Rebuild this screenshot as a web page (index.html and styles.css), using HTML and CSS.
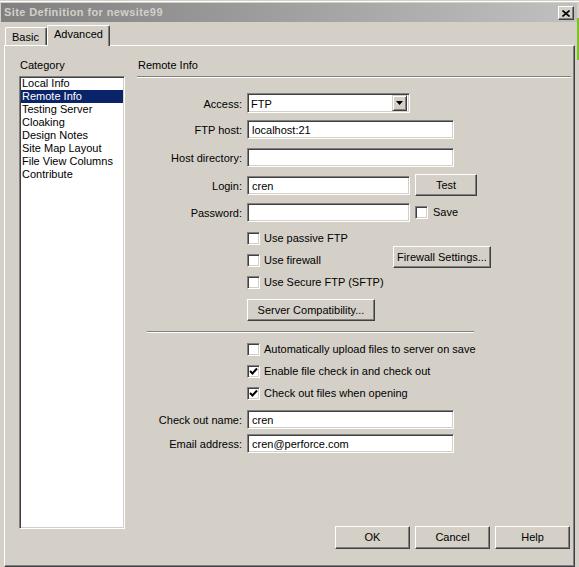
FILE: index.html
```html
<!DOCTYPE html>
<html>
<head>
<meta charset="utf-8">
<title>Site Definition for newsite99</title>
<link rel="stylesheet" href="styles.css">
</head>
<body>
<div class="window">
  <div class="titlebar">
    <span class="title">Site Definition for newsite99</span>
    <span class="close-btn">
      <svg width="8" height="7" viewBox="0 0 8 7"><path d="M0.5 0.5 L7.5 6.5 M7.5 0.5 L0.5 6.5" stroke="#000" stroke-width="1.6" fill="none"/></svg>
    </span>
  </div>
  <div class="tabs">
    <div class="tab tab-basic">Basic</div>
    <div class="tab tab-active">Advanced</div>
  </div>
  <div class="panel">
    <div class="left-col">
      <div class="caption">Category</div>
      <ul class="listbox">
        <li>Local Info</li>
        <li class="selected">Remote Info</li>
        <li>Testing Server</li>
        <li>Cloaking</li>
        <li>Design Notes</li>
        <li>Site Map Layout</li>
        <li>File View Columns</li>
        <li>Contribute</li>
      </ul>
    </div>
    <div class="right-col">
      <div class="caption">Remote Info</div>
      <div class="etched etched-head"></div>

      <div class="row row-access">
        <span class="lbl">Access:</span>
        <div class="select sunken">
          <span class="select-text">FTP</span>
          <span class="select-btn">
            <svg width="7" height="4" viewBox="0 0 7 4"><path d="M0 0 H7 L3.5 4 Z" fill="#000"/></svg>
          </span>
        </div>
      </div>
      <div class="row row-m7">
        <span class="lbl">FTP host:</span>
        <div class="field sunken wide">localhost:21</div>
      </div>
      <div class="row row-m9">
        <span class="lbl">Host directory:</span>
        <div class="field sunken wide"></div>
      </div>
      <div class="row row-m9">
        <span class="lbl">Login:</span>
        <div class="field sunken narrow">cren</div>
        <button class="btn btn-test">Test</button>
      </div>
      <div class="row row-m8">
        <span class="lbl">Password:</span>
        <div class="field sunken narrow"></div>
        <span class="check-item save-item"><span class="cb sunken"></span>Save</span>
      </div>

      <div class="check-group">
        <div class="checks">
          <span class="check-item"><span class="cb sunken"></span>Use passive FTP</span>
          <span class="check-item"><span class="cb sunken"></span>Use firewall</span>
          <span class="check-item"><span class="cb sunken"></span>Use Secure FTP (SFTP)</span>
        </div>
        <button class="btn btn-firewall">Firewall Settings...</button>
      </div>

      <div class="indent">
        <button class="btn btn-compat">Server Compatibility...</button>
      </div>

      <div class="etched etched-mid"></div>

      <div class="checks checks-lower indent">
        <span class="check-item"><span class="cb sunken"></span>Automatically upload files to server on save</span>
        <span class="check-item"><span class="cb sunken"><svg width="9" height="9" viewBox="0 0 9 9"><path d="M1 4 L3.5 6.5 L8 1.5" stroke="#000" stroke-width="2" fill="none"/></svg></span>Enable file check in and check out</span>
        <span class="check-item"><span class="cb sunken"><svg width="9" height="9" viewBox="0 0 9 9"><path d="M1 4 L3.5 6.5 L8 1.5" stroke="#000" stroke-width="2" fill="none"/></svg></span>Check out files when opening</span>
      </div>

      <div class="row row-m10">
        <span class="lbl">Check out name:</span>
        <div class="field sunken wide">cren</div>
      </div>
      <div class="row row-m5">
        <span class="lbl">Email address:</span>
        <div class="field sunken wide">cren@perforce.com</div>
      </div>

      <div class="dialog-buttons">
        <button class="btn btn-dlg">OK</button>
        <button class="btn btn-dlg">Cancel</button>
        <button class="btn btn-dlg">Help</button>
      </div>
    </div>
  </div>
  <div class="behind-strip"></div>
</div>
</body>
</html>
```

FILE: styles.css
```css
* { box-sizing: border-box; }

html, body {
  margin: 0;
  padding: 0;
  background: #d4d0c8;
}

body {
  font-family: "Liberation Sans", Arial, sans-serif;
  font-size: 11px;
  line-height: 13px;
  color: #000;
}

.window {
  position: relative;
  width: 579px;
  height: 567px;
  padding-top: 3px;
  background: #d4d0c8;
  box-shadow: inset 0 1px #d4d0c8, inset 0 2px #ffffff;
  overflow: hidden;
}

/* Title bar */
.titlebar {
  margin-left: 1px;
  width: 576px;
  height: 19px;
  background: linear-gradient(to right, #808080, #c0c0c0);
  display: flex;
  align-items: center;
  justify-content: space-between;
  padding: 0 3px 0 3px;
}

.title {
  color: #d4d0c8;
  font-weight: bold;
  font-size: 11px;
  letter-spacing: 0.4px;
}

.close-btn {
  width: 16px;
  height: 14px;
  margin-top: 1px;
  background: #d4d0c8;
  border: 1px solid;
  border-color: #fff #404040 #404040 #fff;
  box-shadow: inset -1px -1px #808080;
  display: flex;
  align-items: center;
  justify-content: center;
}

.close-btn svg { display: block; }

/* Tabs */
.tabs {
  height: 23px;
  display: flex;
  align-items: flex-end;
  padding-left: 5px;
  position: relative;
  z-index: 2;
}

.tab {
  background: #d4d0c8;
  border-top: 1px solid #fff;
  border-left: 1px solid #fff;
  border-right: 1px solid #404040;
  box-shadow: inset -1px 0 #808080;
  border-radius: 2px 2px 0 0;
  padding: 2px 0 0 6px;
}

.tab-basic {
  width: 42px;
  height: 18px;
  padding-top: 3px;
}

.tab-active {
  width: 63px;
  height: 21px;
  margin-bottom: -1px;
  padding-top: 2px;
}

/* Panel */
.panel {
  margin-left: 4px;
  width: 571px;
  height: 522px;
  border: 1px solid;
  border-color: #fff #404040 #404040 #fff;
  box-shadow: inset -1px -1px #808080;
  display: flex;
  position: relative;
  z-index: 1;
}

.left-col {
  width: 106px;
  margin-left: 14px;
  padding-top: 13px;
}

.caption {
  height: 13px;
  padding-left: 1px;
}

.listbox {
  list-style: none;
  margin: 4px 0 0 0;
  padding: 0;
  height: 453px;
  background: #fff;
  border: 1px solid;
  border-color: #808080 #fff #fff #808080;
  box-shadow: inset 1px 1px #404040, inset -1px -1px #d4d0c8;
}

.listbox li {
  height: 13px;
  margin: 0 1px;
  padding-left: 1px;
  white-space: nowrap;
}

.listbox li.selected {
  background: #0a246a;
  color: #fff;
}

.right-col {
  flex: 1;
  margin-left: 12px;
  padding-top: 13px;
  padding-bottom: 17px;
  display: flex;
  flex-direction: column;
}

.etched {
  height: 2px;
  border-top: 1px solid #808080;
  border-bottom: 1px solid #fff;
}

.etched-head {
  margin-top: 4px;
  width: 434px;
}

.etched-mid {
  margin-top: 10px;
  margin-left: 10px;
  width: 327px;
}

/* Form rows */
.row {
  display: flex;
  align-items: center;
  height: 19px;
}

.lbl {
  width: 105px;
  margin-right: 5px;
  padding-top: 2px;
  text-align: right;
  white-space: nowrap;
}

.row-access { margin-top: 15px; height: 20px; }
.row-m5 { margin-top: 5px; }
.row-m7 { margin-top: 7px; }
.row-m8 { margin-top: 8px; }
.row-m9 { margin-top: 9px; }
.row-m10 { margin-top: 10px; }

.sunken {
  background: #fff;
  border: 1px solid;
  border-color: #808080 #fff #fff #808080;
  box-shadow: inset 1px 1px #404040, inset -1px -1px #d4d0c8;
}

.field {
  height: 19px;
  padding: 3px 0 0 4px;
  white-space: nowrap;
}

.field.wide { width: 207px; }
.field.narrow { width: 163px; }

.select {
  width: 163px;
  height: 20px;
  display: flex;
  align-items: center;
  padding: 2px;
}

.select-text {
  flex: 1;
  padding-left: 1px;
  padding-top: 2px;
}

.select-btn {
  width: 15px;
  height: 16px;
  background: #d4d0c8;
  border: 1px solid;
  border-color: #d4d0c8 #404040 #404040 #d4d0c8;
  box-shadow: inset 1px 1px #fff, inset -1px -1px #808080;
  display: flex;
  align-items: center;
  justify-content: center;
}

.select-btn svg { display: block; }

.btn {
  font-family: "Liberation Sans", Arial, sans-serif;
  font-size: 11px;
  line-height: 13px;
  color: #000;
  background: #d4d0c8;
  border: 1px solid;
  border-color: #fff #404040 #404040 #fff;
  box-shadow: inset -1px -1px #808080, inset 1px 1px #d4d0c8;
  height: 22px;
  padding: 0;
  border-radius: 0;
  white-space: nowrap;
}

.btn-test {
  width: 62px;
  margin: -2px 0 -1px 5px;
}

.btn-firewall {
  width: 98px;
  height: 22px;
}

.btn-compat {
  width: 128px;
}

.btn-dlg {
  width: 75px;
  height: 23px;
}

/* Check boxes */
.check-item {
  display: flex;
  align-items: center;
  height: 13px;
  white-space: nowrap;
}

.cb {
  width: 13px;
  height: 13px;
  margin-right: 4px;
  display: flex;
  align-items: center;
  justify-content: center;
  flex: none;
}

.cb svg { display: block; }

.save-item {
  margin-left: 5px;
}

.save-item .cb { margin-right: 5px; }

.check-group {
  margin-top: 10px;
  margin-left: 110px;
  display: flex;
  align-items: flex-start;
}

.checks {
  width: 146px;
  display: flex;
  flex-direction: column;
  gap: 9px;
}

.check-group .btn-firewall {
  margin-top: 14px;
}

.indent {
  margin-left: 110px;
}

.indent .btn-compat {
  margin-top: 10px;
}

.checks-lower {
  margin-top: 10px;
  width: auto;
}

.dialog-buttons {
  margin-top: auto;
  display: flex;
  justify-content: flex-end;
  gap: 5px;
  padding-right: 4px;
}

.behind-strip {
  position: absolute;
  right: 0;
  top: 18px;
  width: 2px;
  height: 42px;
  background: #7cc41c;
}
```
